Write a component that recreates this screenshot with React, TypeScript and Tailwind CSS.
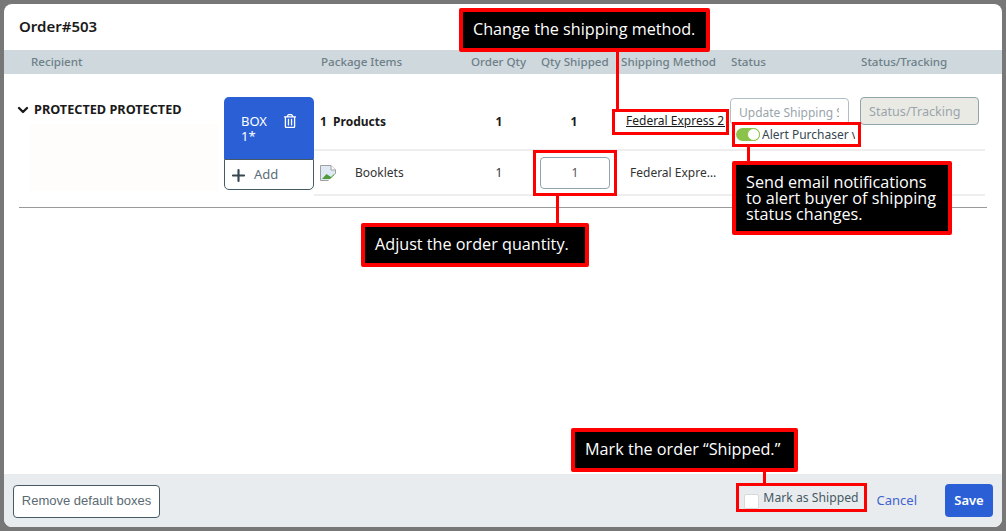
import { ChevronDown, Plus } from "lucide-react";
import { FaRegTrashAlt } from "react-icons/fa";

const SANS = "font-['Noto_Sans','Open_Sans',sans-serif]";

function BrokenImage() {
  return (
    <svg width="16" height="16" viewBox="0 0 16 16" className="shrink-0">
      <path d="M0.5 0.5H11L15.5 5V15.5H0.5Z" fill="#dfe9f5" stroke="#a0a0a0" />
      <path d="M11 0.5V5H15.5" fill="#fff" stroke="#a0a0a0" />
      <path d="M2 14L6.5 9L11 12L14.5 8.5V14Z" fill="#4e9a3c" />
      <path d="M8 16L16 8.5V16Z" fill="#fff" />
    </svg>
  );
}

function Callout({ className, children }: { className: string; children: React.ReactNode }) {
  return (
    <div
      className={`absolute z-20 flex items-center border-4 border-[#fe0000] bg-black pl-[10px] font-['Open_Sans',sans-serif] text-[16.2px] text-white rounded-[2px] ${className}`}
    >
      {children}
    </div>
  );
}

export default function App() {
  return (
    <div className={`relative h-[531px] w-[1006px] overflow-hidden bg-[#777777] p-1 ${SANS}`}>
      <div className="flex h-full flex-col overflow-hidden rounded-lg bg-white">
        <h1 className="flex h-[46px] shrink-0 items-center pl-[15px] pb-[1px] text-[15px] font-semibold text-[#1a1a1a]">
          Order#503
        </h1>

        <div className="grid h-6 shrink-0 grid-cols-[317px_150px_70px_80px_110px_130px_1fr] items-center bg-[#cfd8dc] text-[11.6px] font-medium text-[#6d7f89]">
          <span className="pl-[27px]">Recipient</span>
          <span>Package Items</span>
          <span>Order Qty</span>
          <span>Qty Shipped</span>
          <span>Shipping Method</span>
          <span>Status</span>
          <span>Status/Tracking</span>
        </div>

        <div className="mx-[15px] mt-[23px] box-content flex h-[99px] border-b border-[#9a9a9a] pb-[11px]">
          <div className="w-[205px] shrink-0">
            <div className="mt-[3px] flex items-center gap-[3px] text-[12.7px] font-bold text-[#1a1a1a]">
              <ChevronDown size={16} strokeWidth={3.5} className="-ml-1" />
              PROTECTED PROTECTED
            </div>
            <div className="ml-[11px] mt-[5px] h-[67px] w-[188px] bg-[#fffdfb]" />
          </div>

          <div className="h-[93px] w-[90px] shrink-0">
            <div className="flex h-[62px] items-start rounded-t-[5px] bg-[#2b5fd6] pl-[17px] pr-[17px] pt-[17px] text-[13px] leading-[15px] text-white">
              <span className="flex-1">BOX 1*</span>
              <FaRegTrashAlt size={14} />
            </div>
            <div className="flex h-[31px] items-center gap-[6px] rounded-b-[5px] border border-[#455a64] pl-[4px] pt-[1px] text-[13px] text-[#5c6d77]">
              <Plus size={19} strokeWidth={2.7} className="text-[#37474f]" />
              Add
            </div>
          </div>

          <div className="w-[671px] shrink-0">
            <div className="grid h-[54px] grid-cols-[150px_70px_80px_116px_130px_125px] items-center border-b-2 border-[#eeeeee] text-xs font-bold text-[#1a1a1a]">
              <span className="mb-[2px] pl-[6px]">1&nbsp; Products</span>
              <span className="mb-[2px] text-center">1</span>
              <span className="mb-[2px] text-center">1</span>
              <span className="mb-1 ml-[12px] w-[99px] overflow-hidden whitespace-nowrap font-normal underline">
                Federal Express 2Day
              </span>
              <div className="mt-[1px] flex h-[27px] w-[119px] items-center self-start overflow-hidden rounded-[4px] border border-[#b0bec5] pl-2 pr-[9px] pt-[3px] text-xs font-normal text-[#9aa5ab]">
                <span className="overflow-hidden whitespace-nowrap">Update Shipping Status</span>
              </div>
              <div className="flex h-[28px] w-[119px] items-center self-start rounded-[4px] border border-[#90a4ae] bg-[#eaeae5] pl-2 pt-[3px] text-[12.6px] font-normal text-[#9aa5ab]">
                Status/Tracking
              </div>
            </div>
            <div className="grid h-[45px] grid-cols-[150px_70px_80px_116px] items-center border-b-2 border-[#eeeeee] text-xs text-[#333333]">
              <span className="flex items-center gap-[19px] pl-[6px]">
                <BrokenImage />
                Booklets
              </span>
              <span className="text-center">1</span>
              <div className="ml-[6px] flex h-8 w-[70px] items-center justify-center rounded-[4px] border border-[#90a4ae] text-[#555555]">
                1
              </div>
              <span className="ml-4 w-[88px] truncate">Federal Express 2Day</span>
            </div>
          </div>
        </div>

        <div className="flex-1" />

        <div className="flex h-[53px] shrink-0 items-center bg-[#e9ecef] pl-[9px] pr-[9px]">
          <button className="mt-[1px] h-[33px] w-[147px] rounded-[4px] border border-[#455a64] bg-white font-['Liberation_Sans',sans-serif] text-[13px] text-[#5a6a73]">
            Remove default boxes
          </button>
          <div className="flex-1" />
          <span className="mt-[2px] h-[15px] w-[15px] rounded-[2px] border border-[#d9d9d9] bg-white" />
          <span className="mb-[5px] ml-1 text-[12.2px] text-[#455a64]">Mark as Shipped</span>
          <button className="ml-[18px] text-[13px] text-[#3f63cf]">Cancel</button>
          <button className="ml-7 h-[33px] w-12 rounded-[4px] bg-[#2b5fd6] text-[13px] font-semibold text-white">
            Save
          </button>
        </div>
      </div>

      {/* annotation frames */}
      <div className="absolute left-[612px] top-[109px] z-10 h-[26px] w-[117px] border-[3px] border-[#fe0000]" />
      <div className="absolute left-[533px] top-[150px] z-10 h-[46px] w-[84px] border-[3px] border-[#fe0000]" />
      <div className="absolute left-[732px] top-[122px] z-10 h-[25px] w-[129px] border-[3px] border-[#fe0000]" />
      <div className="absolute left-[736px] top-[483px] z-10 h-[29px] w-[131px] border-[3px] border-[#fe0000]" />

      {/* leader lines */}
      <div className="absolute left-[616px] top-[50px] z-10 h-[60px] w-[3px] bg-[#fe0000]" />
      <div className="absolute left-[556px] top-[196px] z-10 h-[28px] w-[3px] bg-[#fe0000]" />
      <div className="absolute left-[747px] top-[147px] z-10 h-[15px] w-[3px] bg-[#fe0000]" />
      <div className="absolute left-[763px] top-[472px] z-10 h-[12px] w-[3px] bg-[#fe0000]" />

      <Callout className="left-[459px] top-2 h-11 w-[251px] pb-[2px]">Change the shipping method.</Callout>
      <Callout className="left-[361px] top-[223px] h-11 w-[228px] pb-[2px]">Adjust the order quantity.</Callout>
      <Callout className="left-[732px] top-[161px] h-[74px] w-[220px] leading-4">
        Send email notifications
        <br />
        to alert buyer of shipping
        <br />
        status changes.
      </Callout>
      <Callout className="left-[571px] top-[428px] h-11 w-[227px] pb-[2px]">Mark the order “Shipped.”</Callout>

      {/* toggle sits on top of the shipping status input */}
      <div className="absolute left-[736px] top-[128px] z-30 flex items-center">
        <div className="relative h-[13px] w-6 rounded-full bg-[#8bc34a]">
          <div className="absolute right-0 top-0 h-[13px] w-[13px] rounded-full border border-[#8bc34a] bg-white" />
        </div>
        <span className="ml-[2px] w-[93px] overflow-hidden whitespace-nowrap text-xs leading-[13px] text-[#37474f]">
          Alert Purchaser via email
        </span>
      </div>
    </div>
  );
}
